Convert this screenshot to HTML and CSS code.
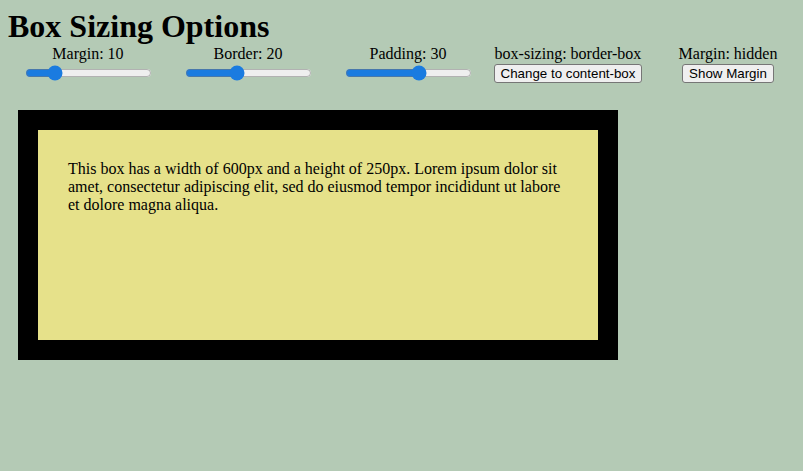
FILE: index.html
```html
<!DOCTYPE html>
<html>
<head>
<meta charset="utf-8">
<link rel="stylesheet" href="styles.css">
</head>
<body>
<h1 class="title">Box Sizing Options</h1>
<div class="controls">
  <div class="control">
    <label class="label">Margin: 10</label>
    <input class="range" type="range" min="0" max="50" value="10">
  </div>
  <div class="control">
    <label class="label">Border: 20</label>
    <input class="range" type="range" min="0" max="50" value="20">
  </div>
  <div class="control">
    <label class="label">Padding: 30</label>
    <input class="range" type="range" min="0" max="50" value="30">
  </div>
  <div class="control">
    <label class="label">box-sizing: border-box</label>
    <button class="btn">Change to content-box</button>
  </div>
  <div class="control">
    <label class="label">Margin: hidden</label>
    <button class="btn">Show Margin</button>
  </div>
</div>
<div class="box">
  <p class="box-text">This box has a width of 600px and a height of 250px. Lorem ipsum dolor sit amet, consectetur adipiscing elit, sed do eiusmod tempor incididunt ut labore et dolore magna aliqua.</p>
</div>
</body>
</html>
```
FILE: styles.css
```css
html, body {
  background: #b4cab5;
}
body {
  margin: 8px;
  font-family: "Liberation Serif", "Times New Roman", serif;
  font-size: 16px;
  color: #000;
}
.title {
  margin: 0;
  font-size: 32px;
  font-weight: bold;
  line-height: 37px;
}
.controls {
  display: flex;
  padding-bottom: 17px;
}
.control {
  width: 160px;
  flex-shrink: 0;
  display: flex;
  flex-direction: column;
  align-items: center;
}
.label {
  display: block;
  line-height: 18px;
}
.range {
  width: 127px;
  margin: 2px 0;
  accent-color: #1a7be0;
}
.btn {
  font-family: "Liberation Sans", Arial, sans-serif;
  font-size: 13.33px;
  padding: 1px 6px;
  border: 1px solid #767676;
  border-radius: 3px;
  background: #efefef;
  color: #000;
  margin-top: 1px;
}
.box {
  box-sizing: border-box;
  width: 600px;
  height: 250px;
  margin: 10px;
  border: 20px solid #000;
  padding: 30px;
  background: #e6e18a;
}
.box-text {
  margin: 0;
  line-height: 18px;
}
```
